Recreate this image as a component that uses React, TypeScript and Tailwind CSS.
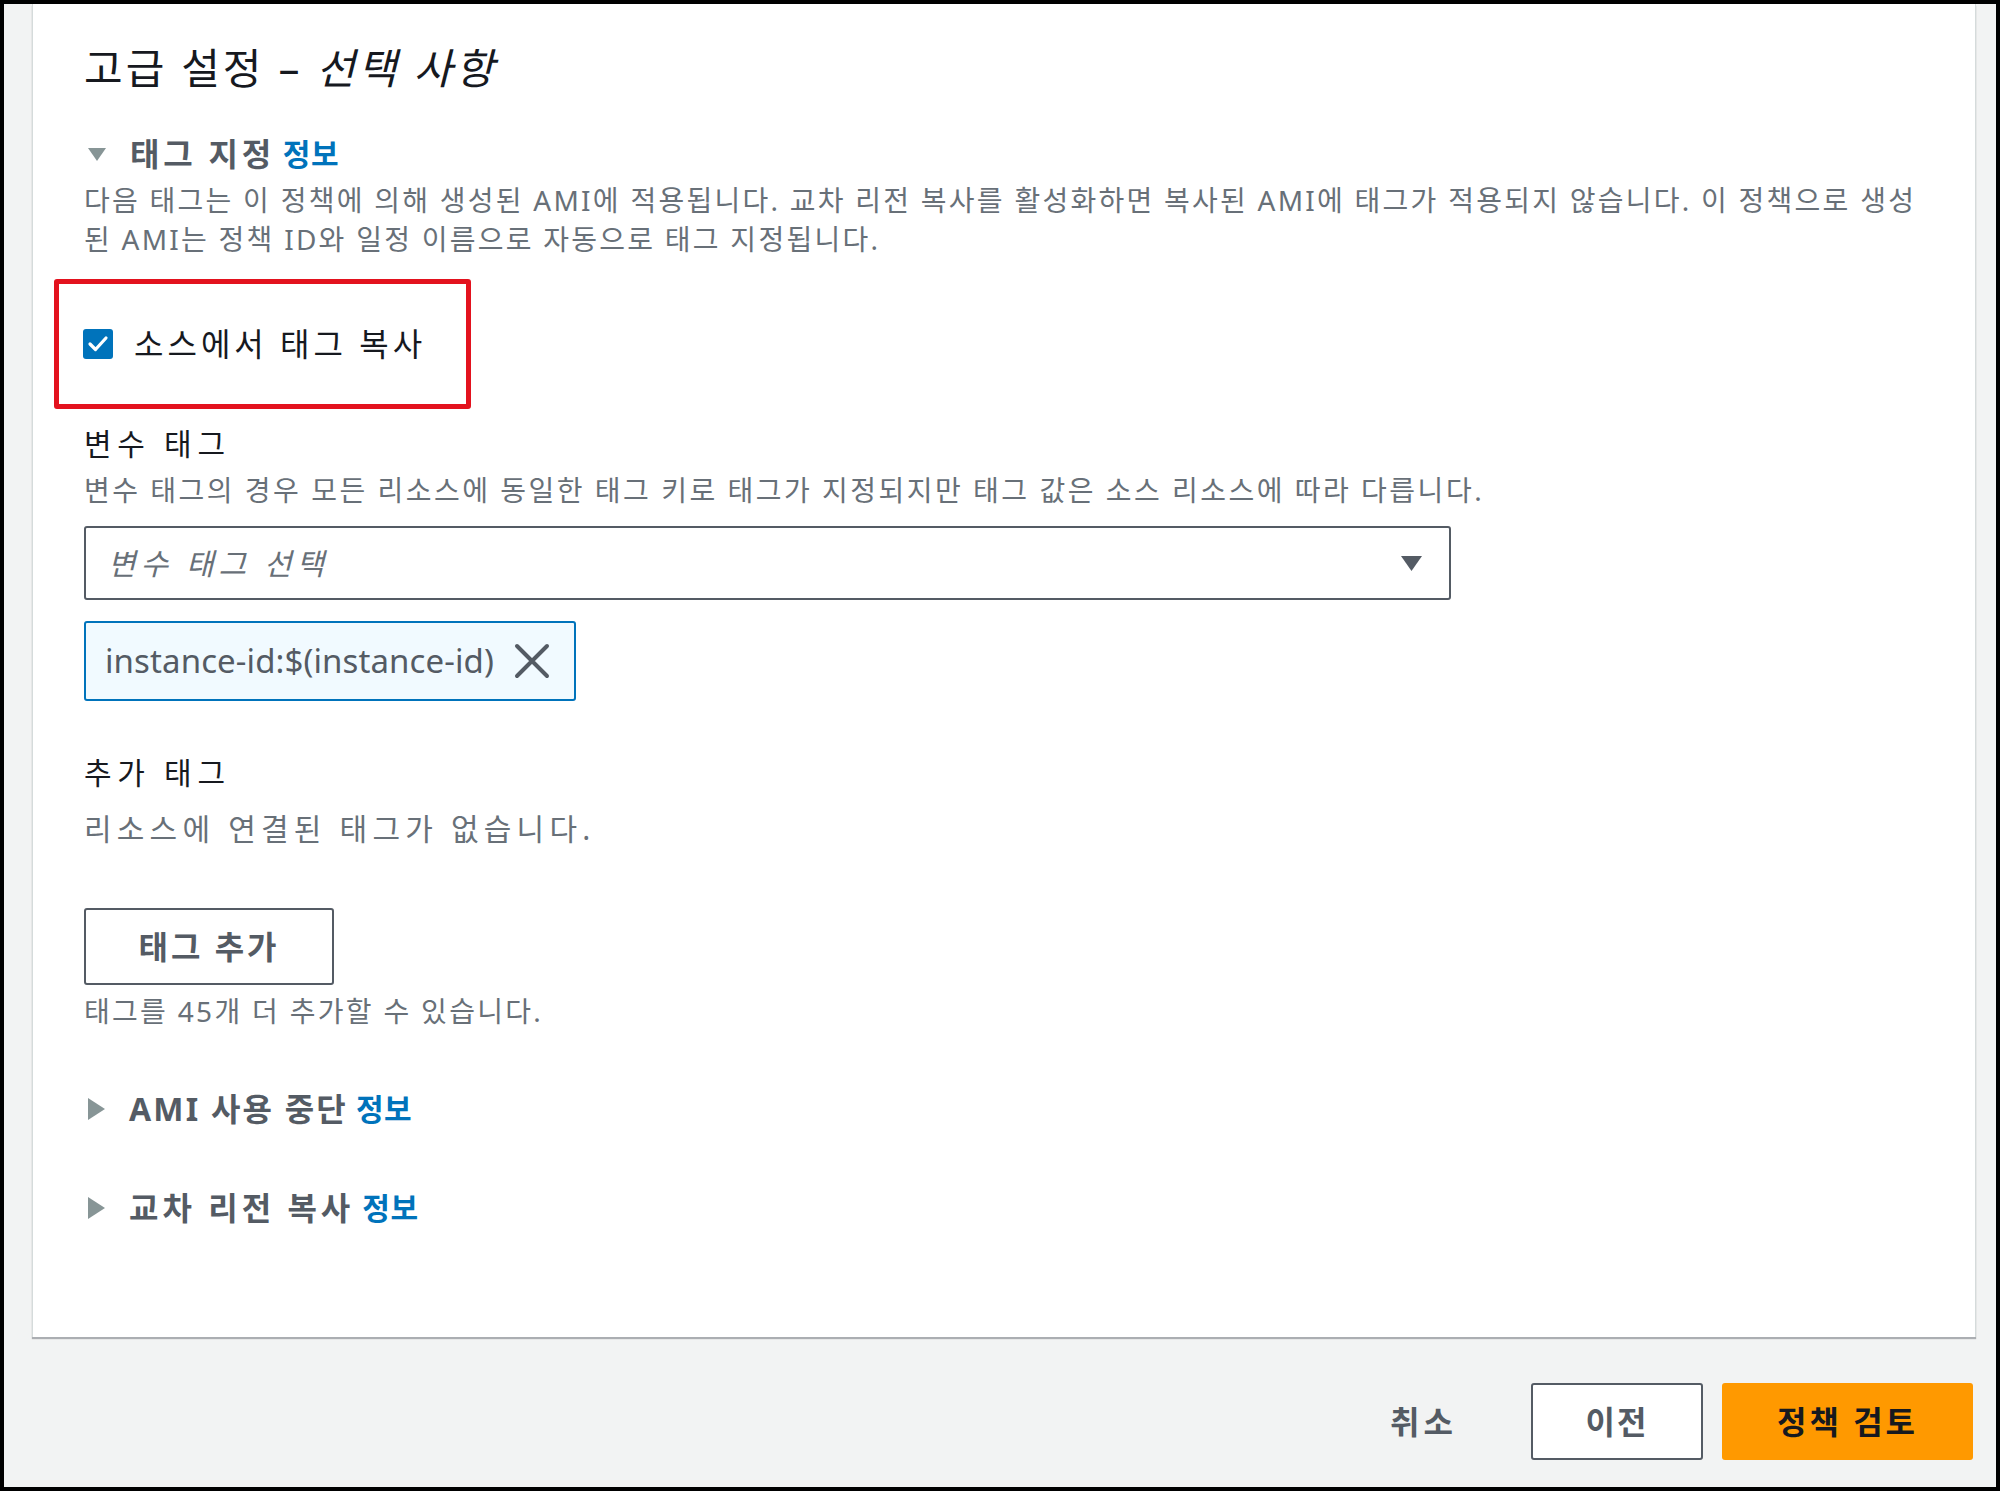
function Caret({ open }: { open: boolean }) {
  return open ? (
    <svg width="20" height="15" viewBox="0 0 20 15" className="ml-[3px] shrink-0">
      <path d="M1 1 L19 1 L10 14 Z" fill="#879596" />
    </svg>
  ) : (
    <svg width="19" height="24" viewBox="0 0 19 24" className="ml-[3px] shrink-0">
      <path d="M1 1 L18 12 L1 23 Z" fill="#879596" />
    </svg>
  );
}

function SectionHeader({ title, open, tracking }: { title: string; open: boolean; tracking: string }) {
  return (
    <div className="flex h-[40px] items-center">
      <Caret open={open} />
      <span className={`ml-[23px] text-[32px] font-bold leading-[40px] text-[#545b64] ${tracking}`}>{title}</span>
      <a className="ml-[8px] text-[30px] font-bold leading-[40px] tracking-[0.5px] text-[#0073bb]">정보</a>
    </div>
  );
}

export default function App() {
  return (
    <div className="flex h-[1491px] w-[2000px] flex-col border-4 border-black bg-[#f2f3f3] font-['Noto_Sans','Noto_Sans_CJK_KR',sans-serif]">
      {/* Card */}
      <div className="ml-[28px] mr-[20px] flex h-[1333px] shrink-0 flex-col items-start border-x border-[#d5dbdb] bg-white pl-[51px] pt-[40px] shadow-[0_2px_1px_rgba(84,91,100,0.45)]">
        <h2 className="h-[48px] text-[42px] leading-[48px] tracking-[3px] text-[#16191f]">
          고급 설정 – <i>선택 사항</i>
        </h2>

        <div className="mt-[42px]">
          <SectionHeader title="태그 지정" open tracking="tracking-[3.75px]" />
        </div>
        <p className="mt-[7px] whitespace-nowrap text-[28px] leading-[39px] tracking-[2.25px] text-[#687078]">
          다음 태그는 이 정책에 의해 생성된 AMI에 적용됩니다. 교차 리전 복사를 활성화하면 복사된 AMI에 태그가 적용되지 않습니다. 이 정책으로 생성
          <br />
          된 AMI는 정책 ID와 일정 이름으로 자동으로 태그 지정됩니다.
        </p>

        {/* Highlighted checkbox */}
        <div className="-ml-[30px] mt-[20px] flex h-[130px] w-[417px] items-center rounded-[3px] border-[5px] border-[#e3121e] pl-[24px]">
          <span className="flex h-[30px] w-[30px] items-center justify-center rounded-[3px] bg-[#0073bb]">
            <svg width="22" height="18" viewBox="0 0 22 18">
              <path d="M3 9 L8.5 14.5 L19 3" fill="none" stroke="white" strokeWidth="3.2" strokeLinecap="round" strokeLinejoin="round" />
            </svg>
          </span>
          <span className="ml-[21px] text-[32px] leading-[40px] tracking-[4px] text-[#16191f]">소스에서 태그 복사</span>
        </div>

        <div className="mt-[15px] h-[40px] text-[30px] leading-[40px] tracking-[5.7px] text-[#16191f]">변수 태그</div>
        <p className="mt-[7px] whitespace-nowrap text-[28px] leading-[39px] tracking-[2.5px] text-[#687078]">
          변수 태그의 경우 모든 리소스에 동일한 태그 키로 태그가 지정되지만 태그 값은 소스 리소스에 따라 다릅니다.
        </p>

        <div className="mt-[16px] flex h-[74px] w-[1367px] items-center justify-between rounded-[3px] border-2 border-[#545b64] pl-[22px] pr-[26px]">
          <span className="text-[30px] italic tracking-[5px] text-[#687078]">변수 태그 선택</span>
          <svg width="23" height="17" viewBox="0 0 23 17">
            <path d="M1 1 L22 1 L11.5 16 Z" fill="#545b64" />
          </svg>
        </div>

        <div className="mt-[21px] flex h-[80px] w-[492px] items-center rounded-[3px] border-2 border-[#0073bb] bg-[#f1faff] pl-[19px]">
          <span className="text-[33px] leading-[40px] tracking-[0.1px] text-[#545b64]">instance-id:$(instance-id)</span>
          <svg width="36" height="36" viewBox="0 0 36 36" className="ml-[20px] shrink-0">
            <path d="M3 3 L33 33 M33 3 L3 33" stroke="#545b64" strokeWidth="4" strokeLinecap="round" />
          </svg>
        </div>

        <div className="mt-[52px] h-[40px] text-[30px] leading-[40px] tracking-[5.7px] text-[#16191f]">추가 태그</div>
        <p className="mt-[16px] whitespace-nowrap text-[30px] leading-[39px] tracking-[5.2px] text-[#687078]">
          리소스에 연결된 태그가 없습니다.
        </p>

        <button className="mt-[60px] flex h-[77px] w-[250px] items-center justify-center rounded-[3px] border-2 border-[#545b64] bg-white text-[32px] font-bold tracking-[3px] text-[#545b64]">
          태그 추가
        </button>
        <p className="mt-[7px] whitespace-nowrap text-[28px] leading-[39px] tracking-[2.3px] text-[#687078]">
          태그를 45개 더 추가할 수 있습니다.
        </p>

        <div className="mt-[58px]">
          <SectionHeader title="AMI 사용 중단" open={false} tracking="tracking-[2.2px]" />
        </div>
        <div className="mt-[59px]">
          <SectionHeader title="교차 리전 복사" open={false} tracking="tracking-[4px]" />
        </div>
      </div>

      {/* Footer actions */}
      <div className="flex flex-1 items-start justify-end pr-[23px] pt-[46px]">
        <button className="mr-[74px] flex h-[77px] items-center text-[32px] font-bold tracking-[4px] text-[#545b64]">취소</button>
        <button className="flex h-[77px] w-[172px] items-center justify-center rounded-[3px] border-2 border-[#545b64] bg-white text-[32px] font-bold tracking-[2px] text-[#545b64]">
          이전
        </button>
        <button className="ml-[19px] flex h-[77px] w-[251px] items-center justify-center rounded-[3px] bg-[#ff9900] text-[32px] font-bold tracking-[3px] text-[#16191f]">
          정책 검토
        </button>
      </div>
    </div>
  );
}
